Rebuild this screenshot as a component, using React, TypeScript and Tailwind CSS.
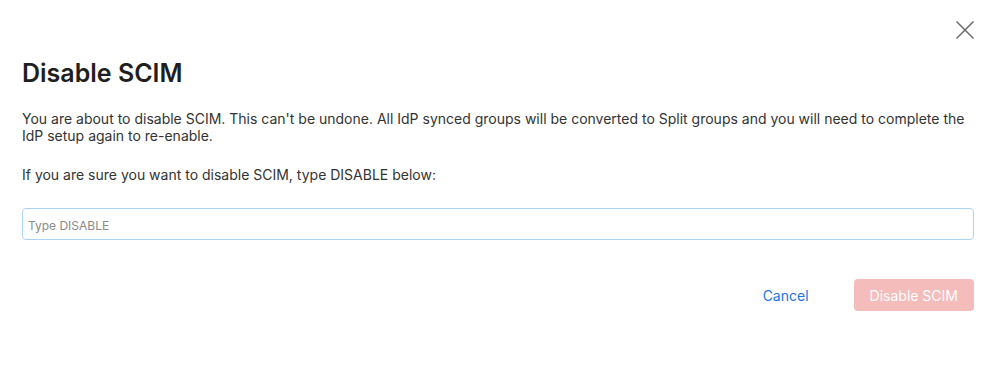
export default function App() {
  return (
    <div className="w-[992px] h-[367px] bg-white font-['Inter',sans-serif] text-[#1f1f1f]">
      <div className="flex justify-end pt-[19px] pr-[16px]">
        <button className="text-[#6b6b6b]" aria-label="Close">
          <svg width="22" height="22" viewBox="0 0 22 22" fill="none" stroke="currentColor" strokeWidth="1.5">
            <path d="M2.5 2.5L19.5 19.5M19.5 2.5L2.5 19.5" />
          </svg>
        </button>
      </div>
      <div className="pl-[22px] pr-[18px]">
        <h2 className="text-[25px] font-semibold leading-[30px] mt-[17px]">Disable SCIM</h2>
        <p className="mt-[22px] text-[14px] leading-[17px] text-[#333]">
          You are about to disable SCIM. This can't be undone. All IdP synced groups will be converted to Split groups and you will need to complete the IdP setup again to re-enable.
        </p>
        <p className="mt-[22px] text-[14px] leading-[17px] text-[#333]">
          If you are sure you want to disable SCIM, type DISABLE below:
        </p>
        <input
          className="mt-[25px] w-full h-[32px] rounded-[4px] border border-[#a9d2f7] pl-[5px] pr-[5px] pt-[2px] text-[12px] outline-none placeholder:text-[#8a8a8a]"
          placeholder="Type DISABLE"
        />
        <div className="flex justify-end items-center mt-[39px] gap-[22px]">
          <button className="text-[14px] text-[#1a73e8] pl-[22px] pr-[23px] h-[32px]">Cancel</button>
          <button className="text-[14px] text-white bg-[#f5bcbc] rounded-[4px] h-[32px] px-[16px]">Disable SCIM</button>
        </div>
      </div>
    </div>
  );
}
